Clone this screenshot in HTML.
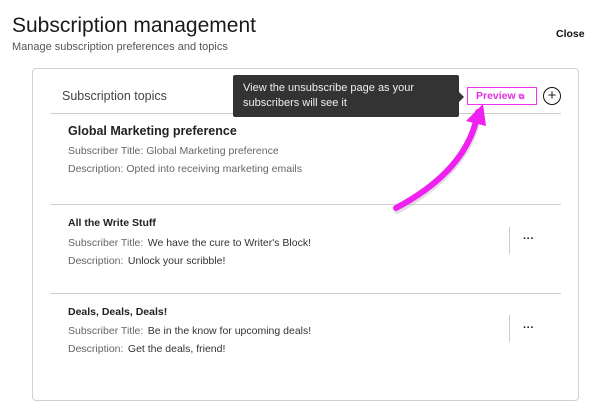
<!DOCTYPE html>
<html><head><meta charset="utf-8"><style>
*{margin:0;padding:0;box-sizing:border-box}
body{width:604px;height:415px;background:#fff;font-family:"Liberation Sans",sans-serif;position:relative;overflow:hidden;color:#222}
.a{position:absolute;white-space:nowrap}
.line{position:absolute;height:1px;background:#cfcfcf}
.lbl{color:#666;font-size:10.5px}
.val{color:#333;font-size:10.5px}
</style></head><body>
<div class="a" style="left:12px;top:14px;font-size:21px;color:#1a1a1a">Subscription management</div>
<div class="a" style="left:12px;top:41px;font-size:11px;color:#555">Manage subscription preferences and topics</div>
<div class="a" style="left:556px;top:28px;font-size:10.5px;font-weight:bold;color:#111">Close</div>
<div class="a" style="left:32px;top:68px;width:547px;height:333px;border:1px solid #d0d0d0;border-radius:4px"></div>
<div class="a" style="left:62px;top:89px;font-size:12.5px;color:#444">Subscription topics</div>
<div class="line" style="left:50px;top:113px;width:511px"></div>
<div class="a" style="left:68px;top:124px;font-size:12.5px;font-weight:bold;color:#222">Global Marketing preference</div>
<div class="a lbl" style="left:68px;top:145px">Subscriber Title: Global Marketing preference</div>
<div class="a lbl" style="left:68px;top:163px">Description: Opted into receiving marketing emails</div>
<div class="line" style="left:50px;top:204px;width:511px"></div>
<div class="a" style="left:68px;top:217px;font-size:10.5px;font-weight:bold">All the Write Stuff</div>
<div class="a" style="left:68px;top:233px"><span class="lbl">Subscriber Title:</span> <span class="val">We have the cure to Writer's Block!</span></div>
<div class="a" style="left:68px;top:251px"><span class="lbl">Description:</span> <span class="val">Unlock your scribble!</span></div>
<div class="a" style="left:509px;top:227px;width:1px;height:27px;background:#ccc"></div>
<div class="a" style="left:523px;top:233px;font-size:11px;font-weight:bold">···</div>
<div class="line" style="left:50px;top:293px;width:511px"></div>
<div class="a" style="left:68px;top:306px;font-size:10.5px;font-weight:bold">Deals, Deals, Deals!</div>
<div class="a" style="left:68px;top:321px"><span class="lbl">Subscriber Title:</span> <span class="val">Be in the know for upcoming deals!</span></div>
<div class="a" style="left:68px;top:339px"><span class="lbl">Description:</span> <span class="val">Get the deals, friend!</span></div>
<div class="a" style="left:509px;top:315px;width:1px;height:27px;background:#ccc"></div>
<div class="a" style="left:523px;top:322px;font-size:11px;font-weight:bold">···</div>
<div class="a" style="left:233px;top:75px;width:226px;height:42px;background:#333;border-radius:2px"></div>
<div class="a" style="left:459px;top:92px;width:0;height:0;border-top:5px solid transparent;border-bottom:5px solid transparent;border-left:5px solid #333"></div>
<div class="a" style="left:243px;top:81px;font-size:11px;color:#eee;line-height:15px">View the unsubscribe page as your<br>subscribers will see it</div>
<div class="a" style="left:467px;top:87px;width:70px;height:18px;border:1.5px solid #ee33ee"></div>
<div class="a" style="left:476px;top:90px;font-size:10.5px;font-weight:bold;color:#e030e0">Preview <span style="font-size:8px">⧉</span></div>
<div class="a" style="left:543px;top:87px;width:18px;height:18px;border:1.3px solid #111;border-radius:50%;text-align:center;font-size:15px;line-height:15px">+</div>
<svg class="a" style="left:0;top:0" width="604" height="415">
<path d="M396 209 C430 190 470 160 478 112" fill="none" stroke="#b0b0b0" stroke-width="6" stroke-linecap="round" opacity=".4" transform="translate(1,2)"/>
<path d="M396 208 C430 190 470 160 478 112" fill="none" stroke="#f020f0" stroke-width="6" stroke-linecap="round"/>
<path d="M466 121 L483 104 L486 126 Z" fill="#f020f0"/>
</svg>
</body></html>
